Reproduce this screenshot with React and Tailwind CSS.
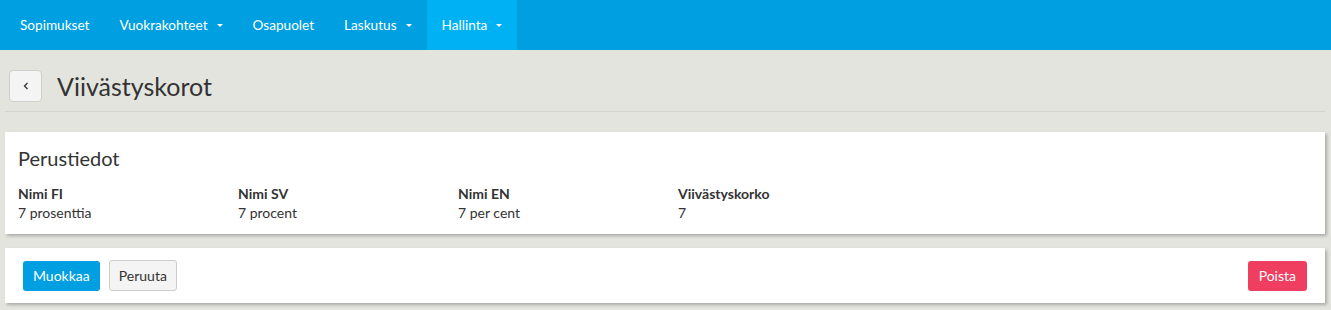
import React from "react";

const Caret = () => (
  <span className="ml-[9px] inline-block w-0 h-0 border-l-[3px] border-r-[3px] border-t-[3px] border-l-transparent border-r-transparent border-t-white align-middle" />
);

const NavItem = ({ label, caret, active }) => (
  <div className={`h-full flex items-center px-[15px] text-[13.6px] text-white ${active ? "bg-[#00b1f4]" : ""}`}>
    <span>{label}</span>
    {caret && <Caret />}
  </div>
);

const Field = ({ label, value }) => (
  <div className="w-[220px]">
    <div className="text-[14px] font-bold text-[#333] leading-[19px]">{label}</div>
    <div className="text-[14px] text-[#333] leading-[19px]">{value}</div>
  </div>
);

export default function App() {
  return (
    <div className="w-[1331px] h-[310px] bg-[#e4e4df] font-['Lato',sans-serif] overflow-hidden">
      <nav className="h-[50px] bg-[#009fe2] flex items-stretch pl-[5px]">
        <NavItem label="Sopimukset" />
        <NavItem label="Vuokrakohteet" caret />
        <NavItem label="Osapuolet" />
        <NavItem label="Laskutus" caret />
        <NavItem label="Hallinta" caret active />
      </nav>
      <div className="px-[5px] pr-[6px]">
        <div className="flex items-center pt-[20px] pb-[9px] border-b border-[#d4d4cf] mb-[20px]">
          <button className="ml-[4px] w-[33px] h-[32px] rounded-[4px] border border-[#cfcfcb] bg-[#f4f4f4] flex items-center justify-center">
            <svg width="10" height="12" viewBox="0 0 10 12">
              <path d="M6.5 3 L3.5 6 L6.5 9" stroke="#333" strokeWidth="1.3" fill="none" />
            </svg>
          </button>
          <h1 className="ml-[15px] text-[25px] text-[#333] leading-[30px]">Viivästyskorot</h1>
        </div>
        <div className="bg-white shadow-[2px_2px_3px_rgba(0,0,0,0.25)] px-[13px] pt-[14px] pb-[12px]">
          <h2 className="text-[20px] text-[#333] leading-[24px] mb-[14px]">Perustiedot</h2>
          <div className="flex">
            <Field label="Nimi FI" value="7 prosenttia" />
            <Field label="Nimi SV" value="7 procent" />
            <Field label="Nimi EN" value="7 per cent" />
            <Field label="Viivästyskorko" value="7" />
          </div>
        </div>
        <div className="mt-[14px] bg-white shadow-[2px_2px_3px_rgba(0,0,0,0.25)] px-[18px] py-[12px] flex items-center">
          <button className="h-[30px] px-[10px] rounded-[3px] bg-[#009fe2] text-white text-[14px]">Muokkaa</button>
          <button className="ml-[9px] h-[31px] px-[9px] rounded-[3px] border border-[#cccccc] bg-[#f4f4f4] text-[#333] text-[14px]">Peruuta</button>
          <button className="ml-auto h-[30px] px-[11px] rounded-[3px] bg-[#f03e61] text-white text-[14px]">Poista</button>
        </div>
      </div>
    </div>
  );
}
